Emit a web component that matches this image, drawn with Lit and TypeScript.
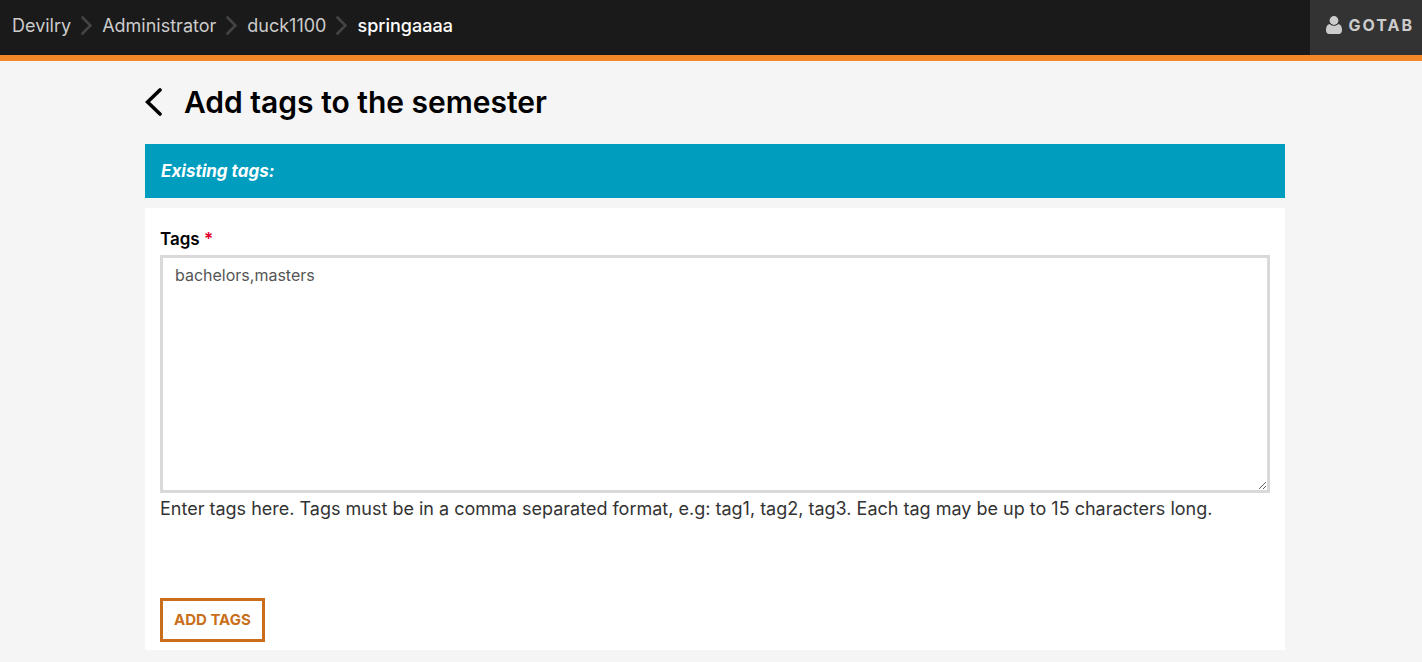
import { LitElement, html, css } from "lit";
import { customElement, property, state } from "lit/decorators.js";

interface Crumb {
  label: string;
  current?: boolean;
}

@customElement("breadcrumb-bar")
class BreadcrumbBar extends LitElement {
  @property({ attribute: false }) crumbs: Crumb[] = [];
  @property() user = "";

  static styles = css`
    :host {
      display: block;
    }
    .bar {
      display: flex;
      justify-content: space-between;
      background: #1a1a1a;
      border-bottom: 6px solid #f38826;
    }
    .trail {
      display: flex;
    }
    .crumbs {
      display: flex;
      align-items: center;
      gap: 10px;
      margin: 0;
      padding: 0 12px 4px;
      font-size: 18px;
      list-style: none;
    }
    .crumb {
      display: flex;
      align-items: center;
      gap: 10px;
    }
    .link {
      color: #ccc;
      text-decoration: none;
    }
    .current {
      color: #fff;
      font-weight: 500;
    }
    .separator {
      display: block;
      width: 11px;
      height: 19px;
    }
    .user {
      display: flex;
      align-items: center;
      gap: 6px;
      height: 55px;
      padding: 0 8px 6px 16px;
      background: #333;
      color: #ccc;
      border: 0;
      font: inherit;
      font-weight: 700;
      letter-spacing: 2px;
      text-transform: uppercase;
    }
    .person {
      display: block;
      width: 16px;
      height: 18px;
    }
  `;

  render() {
    return html`
      <header class="bar">
        <nav class="trail" aria-label="Breadcrumb">
          <ol class="crumbs">
            ${this.crumbs.map(
              (crumb, index) => html`
                <li class="crumb">
                  ${index > 0
                    ? html`<svg class="separator" viewBox="0 0 11 19" aria-hidden="true">
                        <path d="M1.5 1.5 9.5 9.5 1.5 17.5" fill="none" stroke="#444" stroke-width="2.6" stroke-linecap="round" />
                      </svg>`
                    : ""}
                  <a class="link ${crumb.current ? "current" : ""}" href="#">${crumb.label}</a>
                </li>
              `
            )}
          </ol>
        </nav>
        <button class="user" type="button">
          <svg class="person" viewBox="0 0 16 18" aria-hidden="true">
            <g fill="#ccc">
              <circle cx="8" cy="4.5" r="4.4" />
              <path d="M3.6 8C1 8.4 0 11 0 14.2C0 16.6 1.3 18 3.3 18H12.7C14.7 18 16 16.6 16 14.2C16 11 15 8.4 12.4 8C11.2 9.1 9.8 9.8 8 9.8C6.2 9.8 4.8 9.1 3.6 8Z" />
            </g>
          </svg>
          ${this.user}
        </button>
      </header>
    `;
  }
}

@customElement("app-root")
class AppRoot extends LitElement {
  @state() private tags = "bachelors,masters";

  private crumbs: Crumb[] = [
    { label: "Devilry" },
    { label: "Administrator" },
    { label: "duck1100" },
    { label: "springaaaa", current: true },
  ];

  static styles = css`
    :host {
      display: block;
      min-height: 100vh;
      box-sizing: border-box;
      padding-bottom: 12px;
      background: #f5f5f5;
      color: #333;
      font-family: Inter, "Open Sans", sans-serif;
      font-size: 16px;
      line-height: 24px;
    }
    .page {
      max-width: 1140px;
      margin: 0 auto;
      padding: 0 12px 0 20px;
    }
    .heading {
      display: flex;
      align-items: center;
      gap: 22px;
      padding: 21px 0 22px;
    }
    .back {
      display: block;
    }
    .chevron {
      display: block;
      width: 17px;
      height: 28px;
    }
    .title {
      margin: 0;
      color: #000;
      font-size: 30px;
      font-weight: 600;
      line-height: 40px;
    }
    .notice {
      margin: 0 0 10px;
      padding: 15px 16px;
      background: #009dbf;
      color: #fff;
      font-size: 17px;
      font-style: italic;
      font-weight: 700;
    }
    .panel {
      padding: 19px 15px 8px;
      background: #fff;
    }
    .label {
      display: block;
      margin-bottom: 4px;
      color: #000;
      font-size: 17px;
      font-weight: 600;
    }
    .required {
      color: #e3002b;
    }
    .input {
      display: block;
      box-sizing: border-box;
      width: 100%;
      height: 238px;
      margin: 0;
      padding: 5px 12px;
      border: 3px solid #d9d9d9;
      border-radius: 0;
      background: #fff;
      color: #555;
      font: inherit;
      resize: vertical;
    }
    .help {
      margin: 4px 0 77px;
      font-size: 18px;
    }
    .submit {
      padding: 7px 11px;
      border: 3px solid #c96f1c;
      background: #fff;
      color: #c96f1c;
      font: inherit;
      font-size: 15px;
      font-weight: 700;
      line-height: 24px;
      text-transform: uppercase;
    }
  `;

  private onInput(event: Event) {
    this.tags = (event.target as HTMLTextAreaElement).value;
  }

  render() {
    return html`
      <breadcrumb-bar .crumbs=${this.crumbs} user="gotab"></breadcrumb-bar>
      <main class="page">
        <div class="heading">
          <a class="back" href="#" aria-label="Back">
            <svg class="chevron" viewBox="0 0 17 28" aria-hidden="true">
              <path d="M15 2 2.5 14 15 26" fill="none" stroke="#000" stroke-width="3.6" stroke-linecap="round" />
            </svg>
          </a>
          <h1 class="title">Add tags to the semester</h1>
        </div>
        <p class="notice">Existing tags:</p>
        <form class="panel" @submit=${(event: Event) => event.preventDefault()}>
          <label class="label" for="tags">Tags <span class="required">*</span></label>
          <textarea class="input" id="tags" aria-describedby="tags-help" required .value=${this.tags} @input=${this.onInput}></textarea>
          <p class="help" id="tags-help">Enter tags here. Tags must be in a comma separated format, e.g: tag1, tag2, tag3. Each tag may be up to 15 characters long.</p>
          <button class="submit" type="submit">Add tags</button>
        </form>
      </main>
    `;
  }
}
